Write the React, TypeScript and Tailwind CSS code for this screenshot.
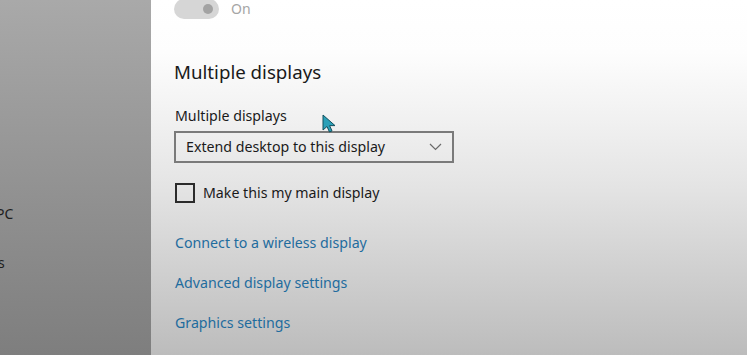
export default function App() {
  return (
    <div className="relative flex h-[355px] w-[747px] overflow-hidden font-['Noto_Sans',sans-serif]">
      {/* left nav (dimmed) */}
      <div className="relative w-[151px] shrink-0 bg-gradient-to-b from-[#a9a9a9] to-[#7e7e7e] text-[14px] text-[#1e1e1e]">
        <div className="absolute left-[-4px] top-[203px] leading-[22px]">PC</div>
        <div className="absolute left-[-2px] top-[252px] leading-[22px]">s</div>
      </div>

      {/* content */}
      <div className="flex-1 bg-[linear-gradient(to_bottom,#ffffff_0%,#fdfdfd_15%,#e6e6e6_50%,#bcbcbc_100%)] pl-[23px]">
        <div className="mt-[-1px] flex items-center gap-3">
          <div className="relative h-[20px] w-[45px] rounded-full bg-[#d6d6d6]">
            <div className="absolute right-[6px] top-[5px] h-[10px] w-[10px] rounded-full bg-[#a3a3a3]" />
          </div>
          <span className="text-[14px] leading-[20px] text-[#a5a5a5]">On</span>
        </div>

        <h2 className="mt-[41px] text-[18.7px] leading-[24px] text-[#1a1a1a]">Multiple displays</h2>

        <div className="mt-[22px] pl-[1px] text-[14.2px] leading-[20px] text-[#1a1a1a]">Multiple displays</div>

        <div className="mt-[5px] flex h-[32px] w-[280px] items-center justify-between border-2 border-[#7a7a7a] pl-[10px] pr-[10px] text-[14.2px] text-[#1a1a1a]">
          <span>Extend desktop to this display</span>
          <svg width="13" height="8" viewBox="0 0 13 8" fill="none" stroke="#6a6a6a" strokeWidth="1.2">
            <path d="M1 1l5.5 5.5L12 1" />
          </svg>
        </div>

        <label className="mt-[19px] flex items-center gap-[8px] pl-[1px] text-[14.2px] text-[#1a1a1a]">
          <span className="h-[20px] w-[20px] border-2 border-[#2b2b2b]" />
          <span>Make this my main display</span>
        </label>

        <div className="mt-[30px] flex flex-col gap-[20px] pl-[1px] text-[14.2px] leading-[20px] text-[#1f6c9e]">
          <a>Connect to a wireless display</a>
          <a>Advanced display settings</a>
          <a>Graphics settings</a>
        </div>
      </div>

      {/* mouse cursor */}
      <svg className="absolute left-[322px] top-[114px]" width="14" height="20" viewBox="0 0 14 20">
        <path d="M1 1v15l4-3.5 2.5 5.5 2.5-1.1-2.4-5.3H13z" fill="#2aa0b8" stroke="#12505e" strokeWidth="1" strokeLinejoin="round" />
      </svg>
    </div>
  );
}
